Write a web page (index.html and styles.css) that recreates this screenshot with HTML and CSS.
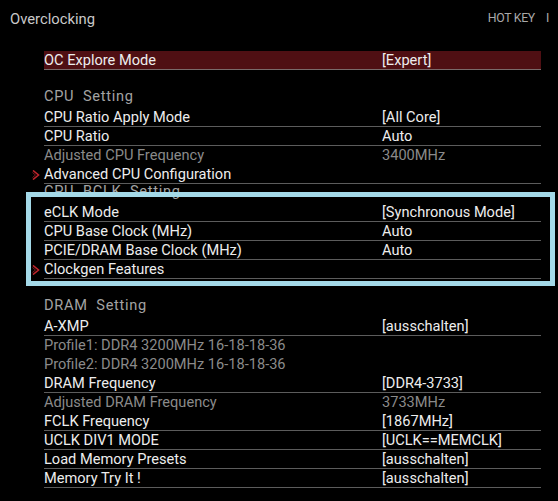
FILE: index.html
```
<!DOCTYPE html>
<html>
<head>
<meta charset="utf-8">
<link rel="stylesheet" href="styles.css">
</head>
<body>
<div class="page">
  <div class="topbar">
    <div class="title">Overclocking</div>
    <div class="hotkey">HOT KEY<span class="sep">I</span></div>
  </div>
  <div class="list">
    <div class="row sel"><span class="name">OC Explore Mode</span><span class="val">[Expert]</span></div>
    <div class="blank"></div>
    <div class="head">CPU&nbsp; Setting</div>
    <div class="row"><span class="name">CPU Ratio Apply Mode</span><span class="val">[All Core]</span></div>
    <div class="row"><span class="name">CPU Ratio</span><span class="val">Auto</span></div>
    <div class="row dis"><span class="name">Adjusted CPU Frequency</span><span class="val">3400MHz</span></div>
    <div class="row sub"><svg class="arr" width="8" height="10" viewBox="0 0 8 10"><path d="M1 0.5 L6.5 5 L1 9.5" fill="none" stroke="#c0242c" stroke-width="1.6"/><path d="M0.5 2.5 L3.5 5 L0.5 7.5" fill="none" stroke="#7a1a1e" stroke-width="1"/></svg><span class="name">Advanced CPU Configuration</span><span class="val"></span></div>
    <div class="head">CPU&nbsp; BCLK&nbsp; Setting</div>
    <div class="row"><span class="name">eCLK Mode</span><span class="val">[Synchronous Mode]</span></div>
    <div class="row"><span class="name">CPU Base Clock (MHz)</span><span class="val">Auto</span></div>
    <div class="row"><span class="name">PCIE/DRAM Base Clock (MHz)</span><span class="val">Auto</span></div>
    <div class="row sub"><svg class="arr" width="8" height="10" viewBox="0 0 8 10"><path d="M1 0.5 L6.5 5 L1 9.5" fill="none" stroke="#c0242c" stroke-width="1.6"/><path d="M0.5 2.5 L3.5 5 L0.5 7.5" fill="none" stroke="#7a1a1e" stroke-width="1"/></svg><span class="name">Clockgen Features</span><span class="val"></span></div>
    <div class="blank"></div>
    <div class="head">DRAM&nbsp; Setting</div>
    <div class="row"><span class="name">A-XMP</span><span class="val">[ausschalten]</span></div>
    <div class="row dis"><span class="name">Profile1: DDR4 3200MHz 16-18-18-36</span><span class="val"></span></div>
    <div class="row dis"><span class="name">Profile2: DDR4 3200MHz 16-18-18-36</span><span class="val"></span></div>
    <div class="row"><span class="name">DRAM Frequency</span><span class="val">[DDR4-3733]</span></div>
    <div class="row dis"><span class="name">Adjusted DRAM Frequency</span><span class="val">3733MHz</span></div>
    <div class="row"><span class="name">FCLK Frequency</span><span class="val">[1867MHz]</span></div>
    <div class="row"><span class="name">UCLK DIV1 MODE</span><span class="val">[UCLK==MEMCLK]</span></div>
    <div class="row"><span class="name">Load Memory Presets</span><span class="val">[ausschalten]</span></div>
    <div class="row"><span class="name">Memory Try It !</span><span class="val">[ausschalten]</span></div>
  </div>
  <div class="focus"></div>
</div>
</body>
</html>
```
FILE: styles.css
```
html, body {
  margin: 0;
  padding: 0;
  background: #000;
}
.page {
  position: relative;
  width: 558px;
  height: 501px;
  overflow: hidden;
  background: #000;
  font-family: Roboto, "Liberation Sans", sans-serif;
  font-size: 14.6px;
  color: #ededed;
}
.topbar {
  display: flex;
  justify-content: space-between;
  align-items: flex-start;
  height: 51px;
  padding: 0 9px 0 10px;
  box-sizing: border-box;
}
.title {
  margin-top: 10px;
  font-size: 14.8px;
  line-height: 18px;
  color: #c9c9c9;
}
.hotkey {
  margin-top: 11px;
  font-size: 12.3px;
  line-height: 14px;
  color: #a9a9a9;
  letter-spacing: -0.3px;
}
.hotkey .sep {
  margin-left: 11px;
}
.list {
  display: flex;
  flex-direction: column;
  margin-left: 44px;
  width: 497px;
}
.row {
  position: relative;
  display: flex;
  height: 19px;
  box-sizing: border-box;
  line-height: 18px;
  border-bottom: 1px solid #5c5c5c;
}
.row.sel {
  background: #4f0f13;
  border-bottom-color: #7a6a6a;
  padding-top: 1px;
  line-height: 17px;
}
.row.dis {
  color: #8a8a8a;
  border-bottom-color: transparent;
}
.name {
  width: 338px;
  flex: none;
  white-space: nowrap;
}
.val {
  white-space: nowrap;
}
.arr {
  position: absolute;
  left: -12px;
  top: 5px;
}
.blank {
  height: 19px;
}
.head {
  height: 19px;
  line-height: 15px;
  color: #a3a3a3;
  letter-spacing: 0.7px;
  white-space: nowrap;
}
.focus {
  position: absolute;
  left: 26px;
  top: 192px;
  width: 529px;
  height: 94px;
  box-sizing: border-box;
  border: 5px solid #a4d9e8;
}
```
